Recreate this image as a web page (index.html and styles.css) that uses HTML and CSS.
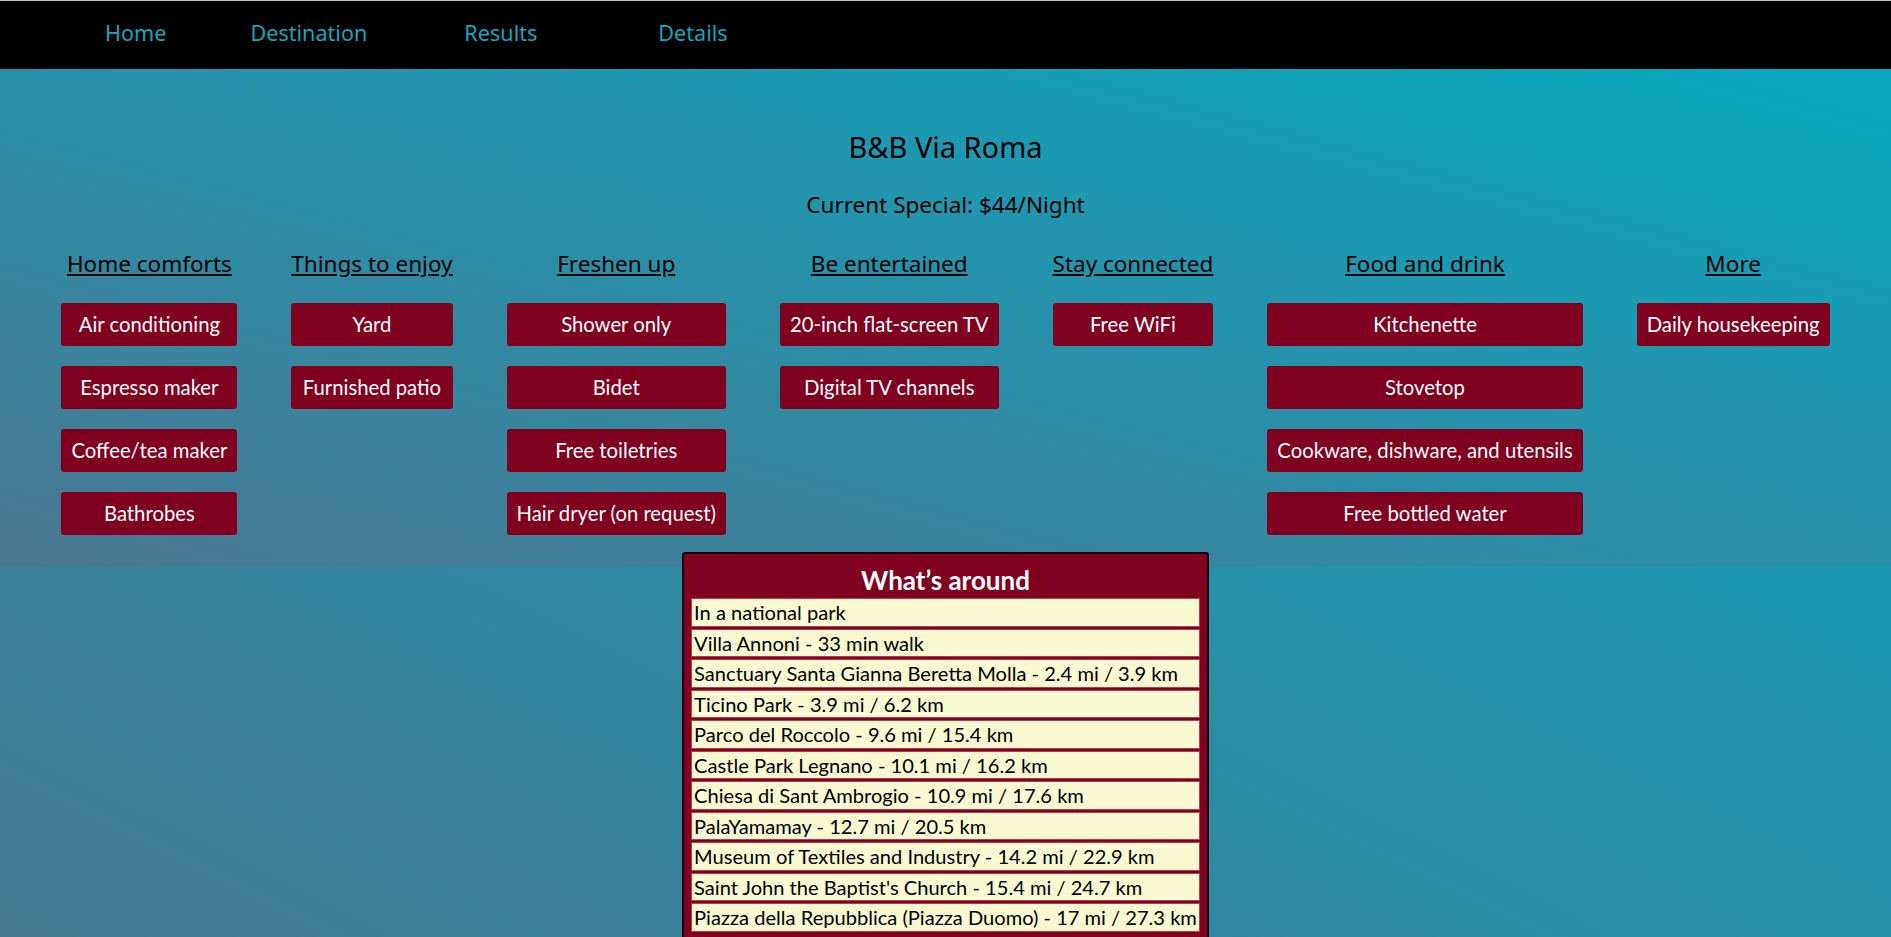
FILE: index.html
```html
<!DOCTYPE html>
<html lang="en">
<head>
<meta charset="utf-8">
<title>B&amp;B Via Roma</title>
<link rel="stylesheet" href="styles.css">
</head>
<body>
<nav class="topnav">
  <ul class="navlist">
    <li class="nav-home"><a href="#">Home</a></li>
    <li class="nav-dest"><a href="#">Destination</a></li>
    <li class="nav-res"><a href="#">Results</a></li>
    <li class="nav-det"><a href="#">Details</a></li>
  </ul>
</nav>
<section class="hero">
  <h1 class="title">B&amp;B Via Roma</h1>
  <p class="special">Current Special: $44/Night</p>
  <div class="amenities">
    <div class="col">
      <h2 class="col-head">Home comforts</h2>
      <span class="tag">Air conditioning</span>
      <span class="tag">Espresso maker</span>
      <span class="tag">Coffee/tea maker</span>
      <span class="tag">Bathrobes</span>
    </div>
    <div class="col">
      <h2 class="col-head">Things to enjoy</h2>
      <span class="tag">Yard</span>
      <span class="tag">Furnished patio</span>
    </div>
    <div class="col">
      <h2 class="col-head">Freshen up</h2>
      <span class="tag">Shower only</span>
      <span class="tag">Bidet</span>
      <span class="tag">Free toiletries</span>
      <span class="tag">Hair dryer (on request)</span>
    </div>
    <div class="col">
      <h2 class="col-head">Be entertained</h2>
      <span class="tag">20-inch flat-screen TV</span>
      <span class="tag">Digital TV channels</span>
    </div>
    <div class="col">
      <h2 class="col-head">Stay connected</h2>
      <span class="tag">Free WiFi</span>
    </div>
    <div class="col">
      <h2 class="col-head">Food and drink</h2>
      <span class="tag">Kitchenette</span>
      <span class="tag">Stovetop</span>
      <span class="tag">Cookware, dishware, and utensils</span>
      <span class="tag">Free bottled water</span>
    </div>
    <div class="col">
      <h2 class="col-head">More</h2>
      <span class="tag">Daily housekeeping</span>
    </div>
  </div>
</section>
<div class="around-wrap">
  <div class="around">
    <h3 class="around-title">What’s around</h3>
    <ul class="around-list">
      <li>In a national park</li>
      <li>Villa Annoni - 33 min walk</li>
      <li>Sanctuary Santa Gianna Beretta Molla - 2.4 mi / 3.9 km</li>
      <li>Ticino Park - 3.9 mi / 6.2 km</li>
      <li>Parco del Roccolo - 9.6 mi / 15.4 km</li>
      <li>Castle Park Legnano - 10.1 mi / 16.2 km</li>
      <li>Chiesa di Sant Ambrogio - 10.9 mi / 17.6 km</li>
      <li>PalaYamamay - 12.7 mi / 20.5 km</li>
      <li>Museum of Textiles and Industry - 14.2 mi / 22.9 km</li>
      <li>Saint John the Baptist's Church - 15.4 mi / 24.7 km</li>
      <li>Piazza della Repubblica (Piazza Duomo) - 17 mi / 27.3 km</li>
    </ul>
  </div>
</div>
</body>
</html>
```
FILE: styles.css
```css
html {
  height: 100%;
}
body {
  margin: 0;
  min-height: 100%;
  background: linear-gradient(to top right, #457891, #07aac1);
  font-family: "Noto Sans", "Open Sans", sans-serif;
  color: #000;
}
.topnav {
  background: #000;
  border-top: 1px solid #c8c8c8;
  height: 68px;
}
.navlist {
  list-style: none;
  margin: 0;
  padding: 0 0 0 105px;
  display: flex;
  align-items: center;
  height: 100%;
}
.navlist li {
  padding-bottom: 6px;
}
.navlist a {
  color: #10a6be;
  text-decoration: none;
  font-family: "Noto Sans", sans-serif;
  font-size: 21.6px;
}
.nav-home { margin-right: 84px; }
.nav-dest { margin-right: 97px; }
.nav-res { margin-right: 121px; }

.hero {
  background: linear-gradient(to top right, #4b7690, #07a9c0);
  padding: 58px 0 32px;
  text-align: center;
}
.title {
  margin: 0;
  font-size: 29px;
  font-weight: 400;
  line-height: 40px;
}
.special {
  margin: 22px 0 0;
  font-size: 22.5px;
  line-height: 32px;
}
.amenities {
  display: flex;
  justify-content: center;
  align-items: flex-start;
  gap: 54px;
  margin-top: 26px;
}
.col {
  display: flex;
  flex-direction: column;
  align-items: stretch;
  gap: 20px;
}
.col-head {
  margin: 0 0 2px;
  font-size: 22.5px;
  font-weight: 400;
  text-decoration: underline;
  line-height: 34px;
  white-space: nowrap;
}
.tag {
  display: block;
  background: #800020;
  color: #fff;
  border-radius: 3px;
  height: 43px;
  line-height: 43px;
  padding: 0 10px;
  font-family: "Lato", sans-serif;
  font-size: 20.3px;
  white-space: nowrap;
}

.around-wrap {
  display: flex;
  justify-content: center;
  margin-top: -15px;
}
.around {
  background: #800020;
  border: 2px solid #1a0008;
  border-radius: 3px;
  padding: 10px 7px 6px;
}
.around-title {
  margin: 0 0 2px;
  text-align: center;
  color: #fff;
  font-family: "Lato", sans-serif;
  font-size: 26px;
  font-weight: 700;
  line-height: 32px;
}
.around-list {
  list-style: none;
  margin: 0;
  padding: 0;
}
.around-list li {
  background: #fafad2;
  border: 1px solid #b04050;
  margin-bottom: 2px;
  padding: 0 2px;
  font-family: "Lato", sans-serif;
  font-size: 20.1px;
  line-height: 26.5px;
  white-space: nowrap;
}
```
